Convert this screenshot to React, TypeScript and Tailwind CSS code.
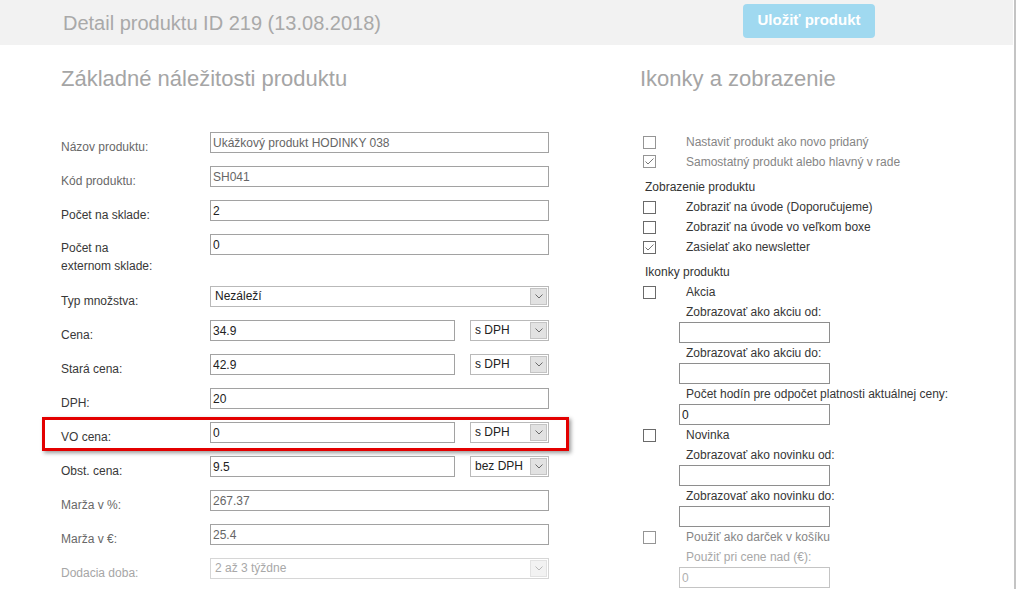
import type { JSX } from "react";
import clsx from "clsx";

type FieldRow = {
	label: string;
	value: string;
	unit?: string;
	muted?: boolean;
	tall?: boolean;
	select?: boolean;
	disabled?: boolean;
	highlight?: boolean;
};

const fields: FieldRow[] = [
	{ label: "Názov produktu:", value: "Ukážkový produkt HODINKY 038", muted: true },
	{ label: "Kód produktu:", value: "SH041", muted: true },
	{ label: "Počet na sklade:", value: "2" },
	{ label: "Počet na externom sklade:", value: "0", tall: true },
	{ label: "Typ množstva:", value: "Nezáleží", select: true },
	{ label: "Cena:", value: "34.9", unit: "s DPH" },
	{ label: "Stará cena:", value: "42.9", unit: "s DPH" },
	{ label: "DPH:", value: "20" },
	{ label: "VO cena:", value: "0", unit: "s DPH", highlight: true },
	{ label: "Obst. cena:", value: "9.5", unit: "bez DPH" },
	{ label: "Marža v %:", value: "267.37", muted: true },
	{ label: "Marža v €:", value: "25.4", muted: true },
	{ label: "Dodacia doba:", value: "2 až 3 týždne", select: true, disabled: true },
];

function SelectBox({
	value,
	wide = false,
	disabled = false,
}: {
	value: string;
	wide?: boolean;
	disabled?: boolean;
}): JSX.Element {
	return (
		<div
			className={clsx(
				"flex h-[21px] items-center border bg-white pl-[4px] pr-px",
				disabled ? "border-[#d6d6d6] text-[#a8a8a8]" : "border-[#b9b9b9] text-[#222]",
				wide ? "w-[339px]" : "w-[79px]",
			)}
		>
			<span className="flex-1 leading-[19px]">{value}</span>
			<span
				className={clsx(
					"flex h-[17px] w-[17px] items-center justify-center border",
					disabled ? "border-[#e2e2e2] bg-[#f2f2f2]" : "border-[#c4c4c4] bg-[#e2e2e2]",
				)}
			>
				<svg width="8" height="5" viewBox="0 0 8 5">
					<polyline
						points="0.5,0.5 4,4 7.5,0.5"
						fill="none"
						stroke={disabled ? "#b8b8b8" : "#6a6a6a"}
						strokeWidth="1"
					/>
				</svg>
			</span>
		</div>
	);
}

function Field({ row }: { row: FieldRow }): JSX.Element {
	const labelTone = row.disabled
		? "text-[#a6a6a6]"
		: row.muted
			? "text-[#686868]"
			: "text-[#383838]";
	return (
		<div className={clsx("relative flex items-start", row.tall ? "h-[52px]" : "h-[34px]")}>
			<div
				className={clsx(
					"w-[149px]",
					labelTone,
					row.tall ? "pt-[5px] leading-[18px]" : "pt-[8px] leading-[14px]",
				)}
			>
				{row.tall ? (
					<>
						Počet na
						<br />
						externom sklade:
					</>
				) : (
					row.label
				)}
			</div>
			{row.select ? (
				<SelectBox value={row.value} wide disabled={row.disabled} />
			) : (
				<div className="flex items-start gap-[15px]">
					<input
						readOnly
						value={row.value}
						className={clsx(
							"h-[21px] border border-[#a2a2a2] bg-white pl-[2px] outline-none",
							row.muted ? "text-[#666]" : "text-[#222]",
							row.unit ? "w-[245px]" : "w-[339px]",
						)}
					/>
					{row.unit && <SelectBox value={row.unit} />}
				</div>
			)}
			{row.highlight && (
				<div className="pointer-events-none absolute -left-[19px] -top-[5px] h-[34px] w-[527px] border-[3px] border-[#e30000] shadow-[2px_2px_4px_rgba(0,0,0,0.4)]" />
			)}
		</div>
	);
}

function Check({ checked = false, light = false }: { checked?: boolean; light?: boolean }): JSX.Element {
	return (
		<span
			className={clsx(
				"ml-[3px] flex h-[13px] w-[13px] items-center justify-center border bg-white",
				light ? "border-[#959595]" : "border-[#6a6a6a]",
			)}
		>
			{checked && (
				<svg width="11" height="11" viewBox="0 0 11 11">
					<polyline points="1.5,5.5 4,8 9.5,2.5" fill="none" stroke="#777" strokeWidth="1" />
				</svg>
			)}
		</span>
	);
}

function CheckRow({
	label,
	checked = false,
	light = false,
	short = false,
}: {
	label: string;
	checked?: boolean;
	light?: boolean;
	short?: boolean;
}): JSX.Element {
	return (
		<div className={clsx("flex items-center", short ? "h-[19px]" : "h-[20px]")}>
			<Check checked={checked} light={light} />
			<span className={clsx("ml-[30px]", light ? "text-[#858585]" : "text-[#363636]")}>{label}</span>
		</div>
	);
}

function SubLabel({ text, dim = false }: { text: string; dim?: boolean }): JSX.Element {
	return (
		<div className={clsx("h-[20px] pl-[46px] leading-[20px]", dim ? "text-[#a8a8a8]" : "text-[#363636]")}>
			{text}
		</div>
	);
}

function SmallInput({ value = "", dim = false }: { value?: string; dim?: boolean }): JSX.Element {
	return (
		<input
			readOnly
			value={value}
			className={clsx(
				"ml-[39px] block h-[21px] w-[151px] border bg-white pl-[2px] outline-none",
				dim ? "border-[#c4c4c4] text-[#b0b0b0]" : "border-[#8e8e8e] text-[#222]",
			)}
		/>
	);
}

export default function App(): JSX.Element {
	return (
		<div className="flex min-h-screen bg-white font-['Liberation_Sans',Arial,sans-serif] text-[12px]">
			<div className="flex-1">
				<header className="flex h-[45px] items-center bg-[#f2f2f2]">
					<h1 className="w-[743px] pl-[63px] text-[20px] leading-[24px] text-[#a9a9a9]">
						Detail produktu ID 219 (13.08.2018)
					</h1>
					<button
						type="button"
						className="-mt-[4px] h-[34px] w-[132px] rounded-[4px] bg-[#a0d9f0] text-[15px] font-bold text-white"
					>
						Uložiť produkt
					</button>
				</header>
				<main className="flex">
					<section className="w-[640px] pl-[61px]">
						<h2 className="mt-[21px] text-[22px] leading-[26px] text-[#a5a5a5]">
							Základné náležitosti produktu
						</h2>
						<div className="mt-[40px]">
							{fields.map(
								(row: FieldRow): JSX.Element => (
									<Field key={row.label} row={row} />
								),
							)}
						</div>
					</section>
					<section className="flex-1">
						<h2 className="mt-[21px] text-[22px] leading-[26px] text-[#a5a5a5]">Ikonky a zobrazenie</h2>
						<div className="mt-[40px]">
							<CheckRow label="Nastaviť produkt ako novo pridaný" light />
							<CheckRow label="Samostatný produkt alebo hlavný v rade" checked light short />
							<div className="mt-[6px] h-[20px] pl-[5px] leading-[20px] text-[#333]">Zobrazenie produktu</div>
							<CheckRow label="Zobraziť na úvode (Doporučujeme)" />
							<CheckRow label="Zobraziť na úvode vo veľkom boxe" />
							<CheckRow label="Zasielať ako newsletter" checked />
							<div className="mt-[5px] h-[20px] pl-[5px] leading-[20px] text-[#333]">Ikonky produktu</div>
							<CheckRow label="Akcia" />
							<SubLabel text="Zobrazovať ako akciu od:" />
							<SmallInput />
							<SubLabel text="Zobrazovať ako akciu do:" />
							<SmallInput />
							<SubLabel text="Počet hodín pre odpočet platnosti aktuálnej ceny:" />
							<SmallInput value="0" />
							<CheckRow label="Novinka" />
							<SubLabel text="Zobrazovať ako novinku od:" />
							<SmallInput />
							<SubLabel text="Zobrazovať ako novinku do:" />
							<SmallInput />
							<CheckRow label="Použiť ako darček v košíku" light />
							<SubLabel text="Použiť pri cene nad (€):" dim />
							<SmallInput value="0" dim />
						</div>
					</section>
				</main>
			</div>
			<div className="w-[3px] border-l border-r-2 border-l-white border-r-[#c4c4c4]" />
		</div>
	);
}
